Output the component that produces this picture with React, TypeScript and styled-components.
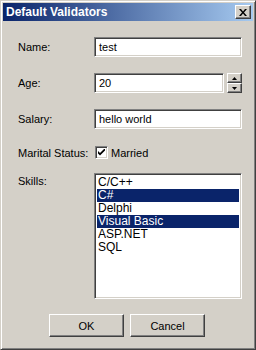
import React from "react";
import styled, { createGlobalStyle, css } from "styled-components";

const Global = createGlobalStyle`
  html, body { margin: 0; padding: 0; background: #d4d0c8; }
  body { font-family: "Liberation Sans", Arial, sans-serif; font-size: 11px; color: #000; }
  * { box-sizing: border-box; }
`;

const raised = css`
  border: 1px solid;
  border-color: #fff #404040 #404040 #fff;
  box-shadow: inset -1px -1px #808080, inset 1px 1px #d4d0c8;
  background: #d4d0c8;
`;

const sunken = css`
  border: 1px solid;
  border-color: #808080 #fff #fff #808080;
  box-shadow: inset 1px 1px #404040, inset -1px -1px #d4d0c8;
  background: #fff;
`;

const Window = styled.div`
  width: 256px;
  height: 350px;
  background: #d4d0c8;
  border: 1px solid;
  border-color: #d4d0c8 #404040 #404040 #d4d0c8;
  box-shadow: inset 1px 1px #fff, inset -1px -1px #808080;
  padding: 3px;
  display: flex;
  flex-direction: column;
`;

const TitleBar = styled.div`
  height: 18px;
  margin: -1px -1px 0 -1px;
  background: linear-gradient(to right, #0a246a, #a6caf0);
  display: flex;
  align-items: center;
  padding: 0 2px 0 3px;
`;

const Title = styled.div`
  flex: 1;
  color: #fff;
  font-weight: bold;
  font-size: 12px;
`;

const CloseBtn = styled.div`
  ${raised};
  width: 16px;
  height: 14px;
  display: flex;
  align-items: center;
  justify-content: center;
`;

const Body = styled.div`
  flex: 1;
  display: flex;
  flex-direction: column;
  padding: 16px 10px 0 14px;
`;

const Row = styled.div<{ $mt?: number; $top?: boolean }>`
  display: flex;
  align-items: ${(p) => (p.$top ? "flex-start" : "center")};
  margin-top: ${(p) => p.$mt ?? 0}px;
`;

const Label = styled.div<{ $pt?: number }>`
  width: 76px;
  flex: none;
  padding-top: ${(p) => p.$pt ?? 0}px;
`;

const TextBox = styled.div<{ $w: number }>`
  ${sunken};
  width: ${(p) => p.$w}px;
  height: 20px;
  padding: 0 4px;
  display: flex;
  align-items: center;
  white-space: nowrap;
`;

const Spin = styled.div`
  display: flex;
  flex-direction: column;
  margin-left: 3px;
`;

const SpinBtn = styled.div`
  ${raised};
  width: 15px;
  height: 10px;
  display: flex;
  align-items: center;
  justify-content: center;
`;

const CheckBox = styled.div`
  ${sunken};
  width: 13px;
  height: 13px;
  margin-left: 1px;
  display: flex;
  align-items: center;
  justify-content: center;
`;

const CheckLabel = styled.span`
  margin-left: 3px;
`;

const ListBox = styled.div`
  ${sunken};
  width: 149px;
  height: 126px;
  padding: 2px 2px;
  display: flex;
  flex-direction: column;
`;

const Item = styled.div<{ $sel?: boolean }>`
  height: 13px;
  line-height: 13px;
  padding-left: 1px;
  font-size: 12px;
  background: ${(p) => (p.$sel ? "#0a246a" : "transparent")};
  color: ${(p) => (p.$sel ? "#fff" : "#000")};
`;

const Buttons = styled.div`
  display: flex;
  justify-content: center;
  gap: 6px;
  margin-top: 15px;
  padding-right: 6px;
`;

const Button = styled.div`
  ${raised};
  width: 75px;
  height: 23px;
  display: flex;
  align-items: center;
  justify-content: center;
`;

const Arrow = ({ up }: { up?: boolean }) => (
  <svg width="5" height="3" viewBox="0 0 5 3">
    <path d={up ? "M2.5 0 L5 3 L0 3 Z" : "M0 0 L5 0 L2.5 3 Z"} fill="#000" />
  </svg>
);

const skills = [
  { name: "C/C++", sel: false },
  { name: "C#", sel: true },
  { name: "Delphi", sel: false },
  { name: "Visual Basic", sel: true },
  { name: "ASP.NET", sel: false },
  { name: "SQL", sel: false },
];

export default function App() {
  return (
    <>
      <Global />
      <Window>
        <TitleBar>
          <Title>Default Validators</Title>
          <CloseBtn>
            <svg width="8" height="7" viewBox="0 0 8 7">
              <path d="M0 0 L2 0 L4 2.5 L6 0 L8 0 L5 3.5 L8 7 L6 7 L4 4.5 L2 7 L0 7 L3 3.5 Z" fill="#000" />
            </svg>
          </CloseBtn>
        </TitleBar>
        <Body>
          <Row>
            <Label>Name:</Label>
            <TextBox $w={149}>test</TextBox>
          </Row>
          <Row $mt={16}>
            <Label>Age:</Label>
            <TextBox $w={132}>20</TextBox>
            <Spin>
              <SpinBtn><Arrow up /></SpinBtn>
              <SpinBtn><Arrow /></SpinBtn>
            </Spin>
          </Row>
          <Row $mt={16}>
            <Label>Salary:</Label>
            <TextBox $w={149}>hello world</TextBox>
          </Row>
          <Row $mt={17}>
            <Label>Marital Status:</Label>
            <CheckBox>
              <svg width="7" height="7" viewBox="0 0 7 7">
                <path d="M0 2 L0 4.5 L2 6.5 L7 1.5 L7 -1 L2 4 Z" fill="#000" />
              </svg>
            </CheckBox>
            <CheckLabel>Married</CheckLabel>
          </Row>
          <Row $mt={14} $top>
            <Label $pt={2}>Skills:</Label>
            <ListBox>
              {skills.map((s) => (
                <Item key={s.name} $sel={s.sel}>{s.name}</Item>
              ))}
            </ListBox>
          </Row>
          <Buttons>
            <Button>OK</Button>
            <Button>Cancel</Button>
          </Buttons>
        </Body>
      </Window>
    </>
  );
}
